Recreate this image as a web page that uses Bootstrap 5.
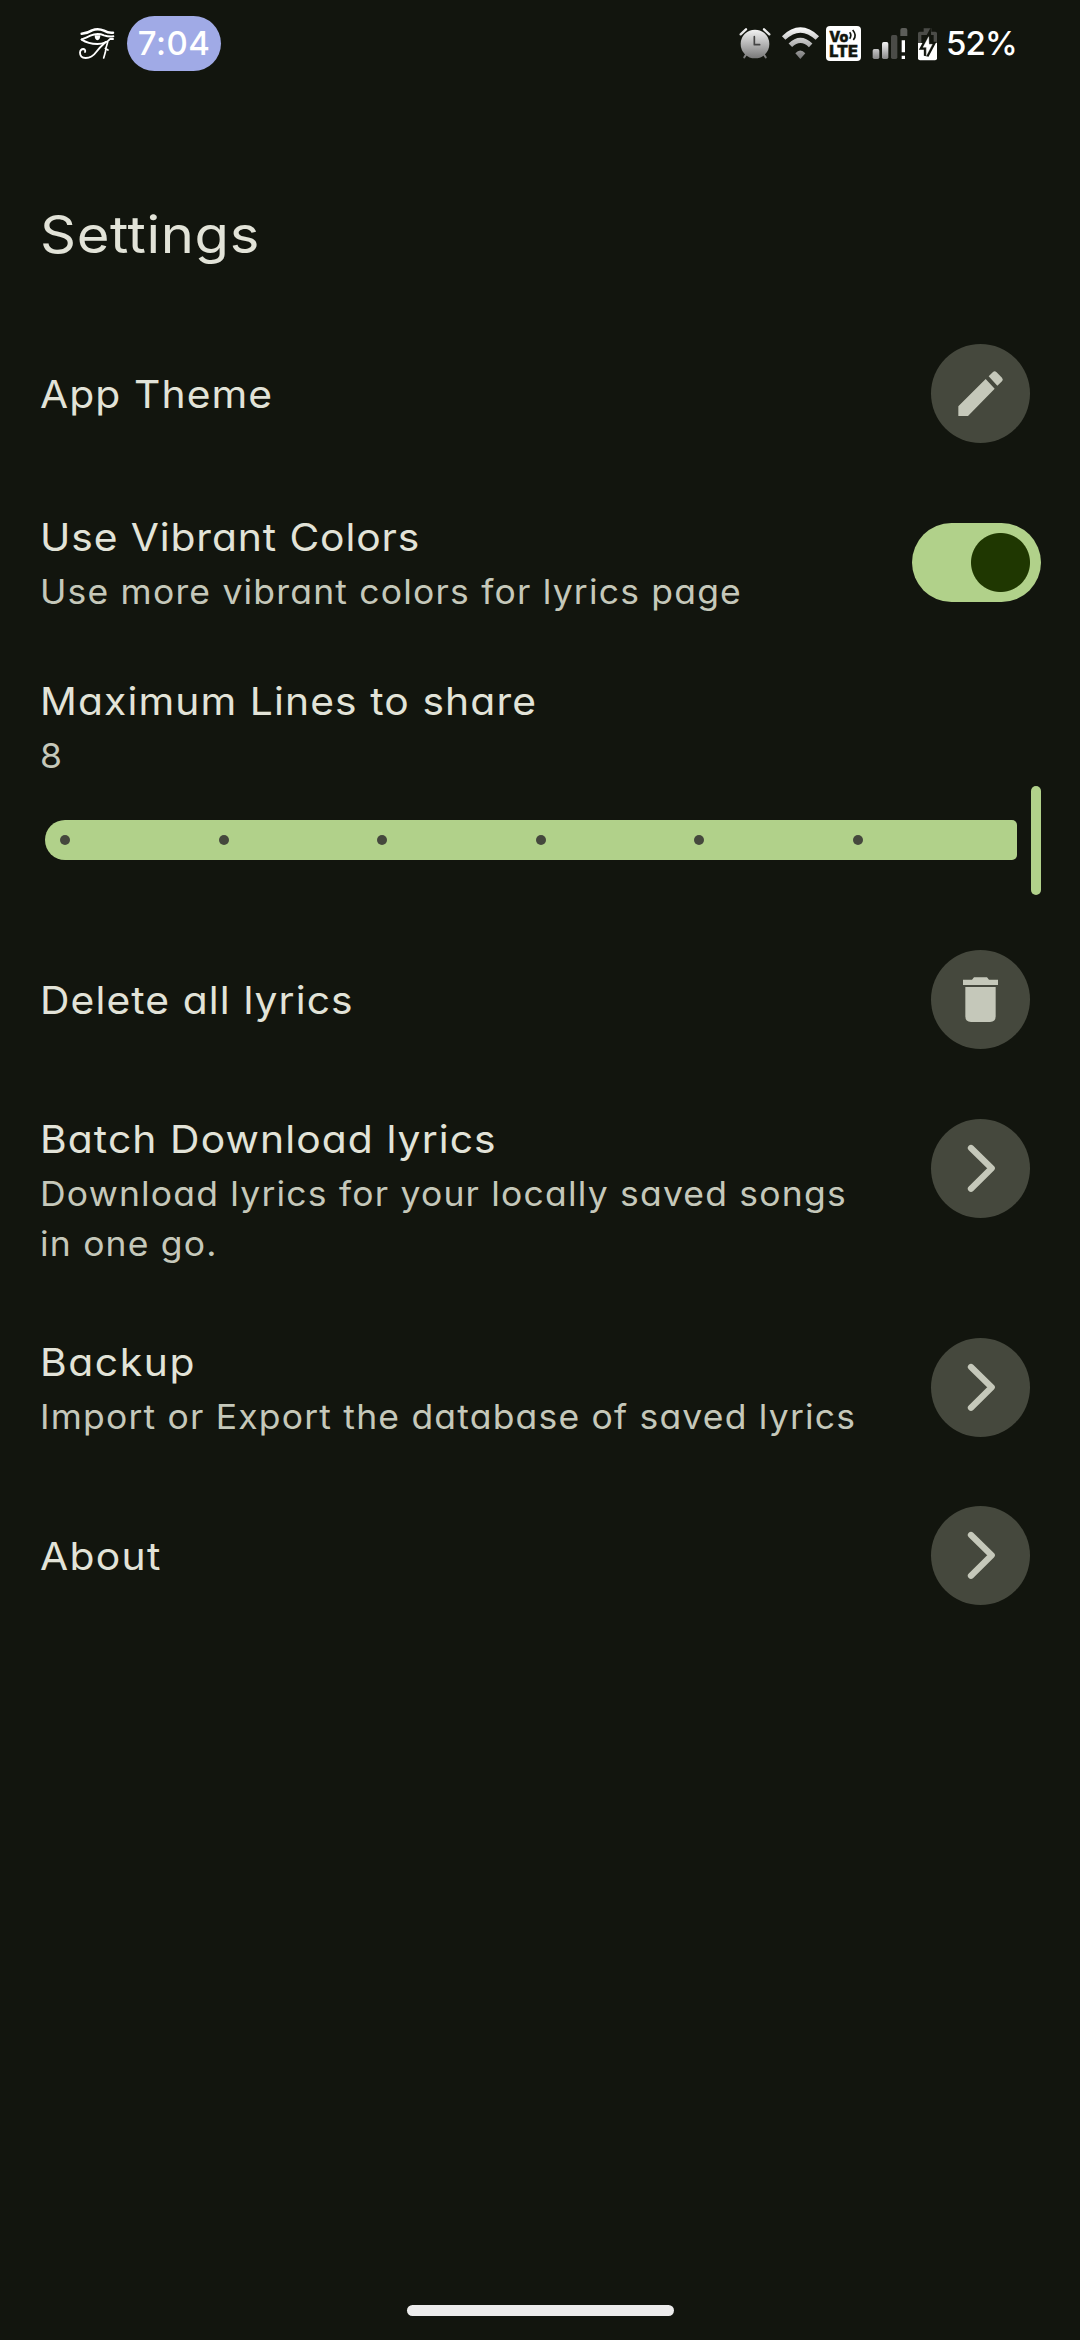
<!DOCTYPE html>
<html lang="en">
<head>
<meta charset="utf-8">
<meta name="viewport" content="width=device-width, initial-scale=1">
<title>Settings</title>
<link href="https://cdn.jsdelivr.net/npm/bootstrap@5.3.0/dist/css/bootstrap.min.css" rel="stylesheet">
<style>
body{background:#12150e;color:#e2e3d8;font-family:Inter,"Noto Sans",sans-serif;font-feature-settings:"cv11"}
.screen{width:1080px;height:2340px;overflow:hidden}
.statusbar{height:86px;padding-left:78px}
.statusbar svg{display:block;flex:none}
.sys-icons{width:342px;height:86px}
.sys-icons svg{margin-top:10px}
.clock{width:94px;height:55px;background:#a0aae6;color:#fff;border-radius:28px;font-size:33px;font-weight:500;line-height:55px;letter-spacing:.5px;margin:16px 0 0 11px;text-align:center}
.percent{color:#fff;font-size:33px;font-weight:500;line-height:55px;letter-spacing:-.87px;margin:16px 0 0 7px}
.settings{padding:0 39px 0 40px}
.page-title{font-size:52px;line-height:70px;font-weight:400;letter-spacing:.57px;margin:114px 0 0;transform:scaleX(1.08);transform-origin:0 0}
.set-row{padding-right:11px}
.t1,.t2{margin:0;font-weight:400;white-space:nowrap;transform:scaleX(1.06);transform-origin:0 0}
.t1{font-size:38.5px;line-height:60px;color:#e2e3d8;letter-spacing:1.03px}
.t2{font-size:33.5px;line-height:50px;color:#c5c8ba;letter-spacing:1.12px}
.round{width:99px;height:99px;background:#45483d;border-radius:50%;padding:0;border:0;flex:none}
.round svg{display:block;width:99px;height:99px;fill:#c5c8ba}
.round .chev{fill:none;stroke:#c5c8ba;stroke-width:19;stroke-linecap:round;stroke-linejoin:round}
.toggle.form-check-input{width:129px;height:79px;margin:0;border:0;border-radius:40px;background-color:#b1d18a;background-image:radial-gradient(circle at 88.5px 39.5px,#1f3701 29px,transparent 30px);background-size:auto;background-position:0 0}
.slider{height:109px;margin-top:5px;padding-left:5px}
.track{width:971.5px;height:40px;margin-top:34px;padding-left:15px;gap:148.5px;background:#b1d18a;border-radius:20px 5px 5px 20px}
.tick{width:10px;height:10px;border-radius:50%;background:#45483d}
.thumb{width:10px;height:109px;border-radius:5px;background:#b1d18a;margin-left:14.5px}
.homebar{width:267px;height:10.5px;border-radius:6px;background:#ececec;margin:auto auto 24.5px}
.r-theme{margin-top:74px}.r-vibrant{margin-top:64px;padding-right:0}.r-lines{margin-top:54px}.r-delete{margin-top:55px}
.r-batch{margin-top:60px}.r-batch .round{margin-top:10px}.r-backup{margin-top:63px}.r-about{margin-top:64px}
.r-vibrant .t1{letter-spacing:.83px}.r-backup .t1{letter-spacing:1.5px}.r-about .t1{letter-spacing:1.25px}
</style>
</head>
<body>
<div class="screen d-flex flex-column">
  <header class="statusbar d-flex align-items-start justify-content-between">
    <div class="d-flex align-items-start">
      <svg width="38" height="86" viewBox="54 0 114 258" fill="none" stroke="#fff" stroke-linecap="round" stroke-linejoin="round">
        <path d="M65 101Q82 100 96 91Q114 84 132 92Q146 100 159 98" stroke-width="7.5"/>
        <path d="M65 118Q79 113 91 107Q112 98 132 106Q146 111 160 109" stroke-width="6"/>
        <path d="M65 119Q85 132 112 132Q139 131 150 117L159 117" stroke-width="6"/>
        <path d="M104 106H121Q121 120 112 121Q104 119 104 106Z" fill="#fff" stroke="none"/>
        <path d="M137 126Q118 143 108 157Q96 174 77 174Q60 173 60 158Q61 147 70 147Q78 149 75 156" stroke-width="5.5"/>
        <path d="M143 127Q137 144 136 157L131 174M136 145L144 150" stroke-width="5"/>
      </svg>
      <div class="clock">7:04</div>
    </div>
    <div class="sys-icons d-flex align-items-start">
      <svg width="34" height="70" viewBox="54 0 102 210">
        <defs><linearGradient id="ga" x1="0" y1="50" x2="0" y2="146" gradientUnits="userSpaceOnUse"><stop stop-color="#fff"/><stop offset="1" stop-color="#777"/></linearGradient></defs>
        <path d="M62 73L78 58M148 73L132 58" stroke="url(#ga)" stroke-width="7" stroke-linecap="round"/>
        <path d="M73 142L80 131M137 142L130 131" stroke="url(#ga)" stroke-width="6" stroke-linecap="round"/>
        <circle cx="105" cy="102" r="43" fill="url(#ga)"/>
        <path d="M103 80V104H119" fill="none" stroke="#444" stroke-width="5" stroke-linecap="round" stroke-linejoin="round"/>
      </svg>
      <svg style="margin-left:9px" width="40" height="70" viewBox="183 0 120 210" fill="none" stroke="url(#ga)">
        <path d="M191 84Q241 36 292 84" stroke-width="15"/>
        <path d="M211 106Q241 76 272 106" stroke-width="15"/>
        <path d="M241 147L226 130Q241 113 256 130Z" fill="url(#ga)" stroke="none"/>
      </svg>
      <svg style="margin-left:4px" width="37" height="70" viewBox="315 0 111 210">
        <rect x="318" y="48" width="105" height="105" rx="12" fill="#fff"/>
        <g fill="#12150e" stroke="#12150e" stroke-width="1.6" font-family="Inter,sans-serif" font-weight="800">
          <text x="328" y="96" font-size="43" textLength="57" lengthAdjust="spacingAndGlyphs">Vo</text>
          <text x="328" y="142" font-size="47" textLength="86" lengthAdjust="spacingAndGlyphs">LTE</text>
        </g>
        <path d="M389 67Q396 76 389 86M398 60Q412 76 400 90" fill="none" stroke="#12150e" stroke-width="5"/>
      </svg>
      <svg style="margin-left:9px" width="38" height="70" viewBox="453 0 114 210">
        <defs><linearGradient id="gs" x1="0" y1="90" x2="0" y2="147" gradientUnits="userSpaceOnUse"><stop stop-color="#fff"/><stop offset="1" stop-color="#888"/></linearGradient></defs>
        <rect x="458" y="117" width="20" height="30" rx="5" fill="url(#gs)"/>
        <rect x="486" y="96" width="19" height="51" rx="5" fill="url(#gs)"/>
        <rect x="513" y="75" width="19" height="72" rx="5" fill="#4a4b47"/>
        <path d="M541 78V60Q541 54 547 54H556Q562 54 562 60V78Z" fill="#5c5d59"/>
        <path d="M545 91H555V127H545ZM545 137H555V147H545Z" fill="#fff"/>
      </svg>
      <svg style="margin-left:7px" width="23" height="70" viewBox="588 0 69 210">
        <path d="M594 99V70Q594 65 599 65H611V55H634V65H646Q651 65 651 70V99H641V75H604V99Z" fill="#4b4c48"/>
        <path d="M594 99H651V145Q651 151 645 151H600Q594 151 594 145Z" fill="#fff"/>
        <path d="M626 80L609 112H619V137L637 103H627Z" fill="#12150e" stroke="#12150e" stroke-width="15"/>
        <path d="M626 80L609 112H619V137L637 103H627Z" fill="#fff" stroke="#fff" stroke-width="1"/>
      </svg>
      <div class="percent">52%</div>
    </div>
  </header>

  <main class="settings">
    <h1 class="page-title">Settings</h1>

    <div class="set-row r-theme d-flex align-items-center justify-content-between">
      <p class="t1">App Theme</p>
      <button class="round btn" type="button" aria-label="Edit theme"><svg viewBox="0 0 297 297"><path d="M82 187L164 105L191 134L111 216H82ZM173 97L186 84Q191 79 196 84L213 101Q218 107 213 112L199 125Z"/></svg></button>
    </div>

    <div class="set-row r-vibrant d-flex align-items-center justify-content-between">
      <div><p class="t1">Use Vibrant Colors</p><p class="t2">Use more vibrant colors for lyrics page</p></div>
      <input class="toggle form-check-input" type="checkbox" role="switch" aria-label="Use Vibrant Colors" checked>
    </div>

    <div class="r-lines">
      <p class="t1">Maximum Lines to share</p>
      <p class="t2">8</p>
      <div class="slider d-flex align-items-start">
        <div class="track d-flex align-items-center">
          <span class="tick"></span><span class="tick"></span><span class="tick"></span><span class="tick"></span><span class="tick"></span><span class="tick"></span>
        </div>
        <div class="thumb"></div>
      </div>
    </div>

    <div class="set-row r-delete d-flex align-items-center justify-content-between">
      <p class="t1">Delete all lyrics</p>
      <button class="round btn" type="button" aria-label="Delete"><svg viewBox="0 0 297 297"><path d="M96 89H123L129 82H168L174 89H201V105H96ZM103 111H194V199Q194 216 177 216H120Q103 216 103 199Z"/></svg></button>
    </div>

    <div class="set-row r-batch d-flex align-items-start justify-content-between">
      <div><p class="t1">Batch Download lyrics</p><p class="t2">Download lyrics for your locally saved songs<br>in one go.</p></div>
      <button class="round btn" type="button" aria-label="Open"><svg viewBox="0 0 297 297"><path class="chev" d="M120 87L182 148L120 209"/></svg></button>
    </div>

    <div class="set-row r-backup d-flex align-items-center justify-content-between">
      <div><p class="t1">Backup</p><p class="t2">Import or Export the database of saved lyrics</p></div>
      <button class="round btn" type="button" aria-label="Open"><svg viewBox="0 0 297 297"><path class="chev" d="M120 87L182 148L120 209"/></svg></button>
    </div>

    <div class="set-row r-about d-flex align-items-center justify-content-between">
      <p class="t1">About</p>
      <button class="round btn" type="button" aria-label="Open"><svg viewBox="0 0 297 297"><path class="chev" d="M120 87L182 148L120 209"/></svg></button>
    </div>
  </main>

  <div class="homebar"></div>
</div>
<script src="https://cdn.jsdelivr.net/npm/bootstrap@5.3.0/dist/js/bootstrap.bundle.min.js"></script>
</body>
</html>
